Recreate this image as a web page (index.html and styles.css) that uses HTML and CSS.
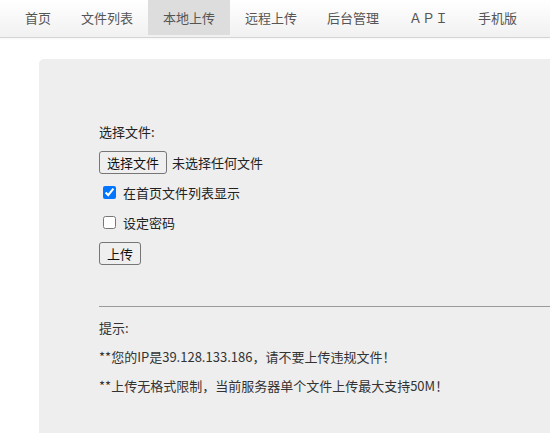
FILE: index.html
```html
<!DOCTYPE html>
<html lang="zh-CN">
<head>
<meta charset="utf-8">
<title>本地上传</title>
<link rel="stylesheet" href="styles.css">
</head>
<body>
<nav class="nav">
  <a class="nav-item" href="#">首页</a>
  <a class="nav-item" href="#">文件列表</a>
  <a class="nav-item active" href="#">本地上传</a>
  <a class="nav-item" href="#">远程上传</a>
  <a class="nav-item" href="#">后台管理</a>
  <a class="nav-item" href="#">ＡＰＩ</a>
  <a class="nav-item" href="#">手机版</a>
</nav>
<main class="panel">
  <form class="upload-form">
    <div class="label">选择文件:</div>
    <div class="file-row">
      <button type="button" class="btn">选择文件</button><span class="file-name">未选择任何文件</span>
    </div>
    <label class="check-row"><input type="checkbox" class="check" checked> 在首页文件列表显示</label>
    <label class="check-row"><input type="checkbox" class="check"> 设定密码</label>
    <div class="submit-row"><button type="button" class="btn">上传</button></div>
  </form>
  <hr class="divider">
  <div class="hints">
    <p>提示:</p>
    <p>**您的IP是39.128.133.186，请不要上传违规文件！</p>
    <p>**上传无格式限制，当前服务器单个文件上传最大支持50M！</p>
  </div>
</main>
</body>
</html>
```
FILE: styles.css
```css
html, body {
  margin: 0;
  padding: 0;
  background: #fff;
  overflow: hidden;
  font-family: "Noto Sans CJK SC", "Liberation Sans", sans-serif;
}

.nav {
  display: flex;
  height: 37px;
  padding-left: 10px;
  background: linear-gradient(#ffffff, #f1f1f1);
  border-bottom: 1px solid #d4d4d4;
  box-shadow: 0 1px 2px rgba(0,0,0,0.04);
}

.nav-item {
  display: flex;
  align-items: center;
  height: 35px;
  padding: 0 15px;
  font-size: 13px;
  color: #555;
  text-decoration: none;
}

.nav-item.active {
  background: #dddddd;
  color: #555;
}

.panel {
  margin: 21px 0 0 39px;
  background: #eeeeee;
  border-top-left-radius: 5px;
  padding: 64px 0 40px 60px;
  min-height: 320px;
}

.upload-form {
  font-size: 13px;
  color: #222;
}

.label {
  line-height: 18px;
  margin-bottom: 10px;
}

.file-row {
  display: flex;
  align-items: center;
  height: 23px;
}

.btn {
  font-family: "Noto Sans CJK SC", "Liberation Sans", sans-serif;
  font-size: 13px;
  color: #111;
  background: #efefef;
  border: 1px solid #767676;
  border-radius: 3px;
  height: 23px;
  padding: 0 7px;
  line-height: 19px;
  margin: 0;
}

.file-name {
  margin-left: 5px;
}

.check-row {
  display: flex;
  align-items: center;
  height: 18px;
  margin-top: 9px;
}

.check-row + .check-row {
  margin-top: 12px;
}

.check {
  margin: 0 7px 0 4px;
  width: 13px;
  height: 13px;
}

.submit-row {
  margin-top: 11px;
}

.divider {
  border: 0;
  border-top: 1px solid #9a9a9a;
  margin: 41px 0 0 0;
  height: 0;
}

.hints {
  font-size: 13px;
  color: #333;
  padding-top: 12px;
}

.hints p {
  margin: 0 0 12px 0;
  line-height: 17px;
}
```
